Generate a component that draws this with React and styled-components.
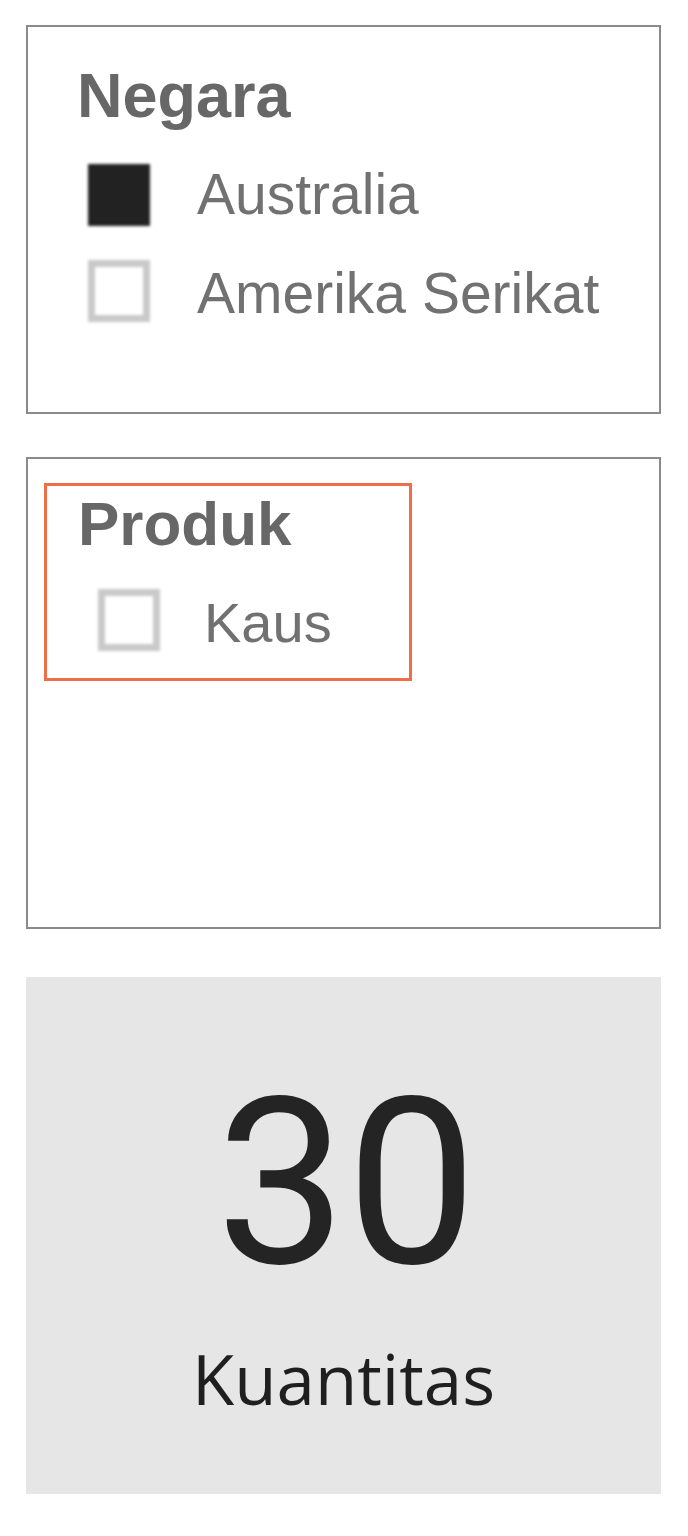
import React from "react"
import styled, { createGlobalStyle } from "styled-components"

const GlobalStyle = createGlobalStyle`
  html, body {
    margin: 0;
    padding: 0;
    background: #ffffff;
  }
  * {
    box-sizing: border-box;
  }
`

const slicers = [
  {
    title: "Negara",
    items: [
      { label: "Australia", checked: true },
      { label: "Amerika Serikat", checked: false },
    ],
  },
  {
    title: "Produk",
    items: [{ label: "Kaus", checked: false }],
  },
]

function Slicer({ title, items, compact }) {
  return (
    <>
      <Title $compact={compact}>{title}</Title>
      {items.map((item) => (
        <Option key={item.label} $compact={compact}>
          <Check $checked={item.checked} />
          <Label $compact={compact}>{item.label}</Label>
        </Option>
      ))}
    </>
  )
}

export default function App() {
  const [country, product] = slicers
  return (
    <Page>
      <GlobalStyle />
      <Panel $height={389}>
        <Body>
          <Slicer title={country.title} items={country.items} />
        </Body>
      </Panel>
      <Panel $height={472}>
        <Highlight>
          <Slicer title={product.title} items={product.items} compact />
        </Highlight>
      </Panel>
      <Card>
        <Value>30</Value>
        <Caption>Kuantitas</Caption>
      </Card>
    </Page>
  )
}

const Page = styled.div`
  display: flex;
  flex-direction: column;
  gap: 43px;
  width: 688px;
  height: 1536px;
  padding: 25px 0 0 26px;
  background: #ffffff;
`

const Panel = styled.section`
  width: 635px;
  height: ${(p) => p.$height}px;
  border: 2px solid #8a8a8a;
  background: #ffffff;
`

const Body = styled.div`
  padding: 37px 0 0 49px;
`

const Highlight = styled.div`
  width: 368px;
  height: 198px;
  margin: 24px 0 0 16px;
  padding: 7px 0 0 31px;
  border: 3px solid #ef6e48;
`

const Title = styled.h2`
  margin: 0 0 ${(p) => (p.$compact ? 24 : 18)}px;
  font-family: "Liberation Sans", Arial, sans-serif;
  font-weight: 700;
  font-size: ${(p) => (p.$compact ? 62 : 63)}px;
  line-height: ${(p) => (p.$compact ? 62 : 63)}px;
  color: #676767;
`

const Option = styled.div`
  display: flex;
  align-items: center;
  height: ${(p) => (p.$compact ? 88 : 99)}px;
  padding-left: ${(p) => (p.$compact ? 20 : 11)}px;
  gap: ${(p) => (p.$compact ? 44 : 47)}px;
`

const Check = styled.span`
  flex: none;
  width: 62px;
  height: 62px;
  margin-top: ${(p) => (p.$checked ? 0 : -6)}px;
  background: ${(p) => (p.$checked ? "#222222" : "#ffffff")};
  border: ${(p) => (p.$checked ? "none" : "7px solid #c9c9c9")};
  filter: blur(1.4px);
`

const Label = styled.span`
  font-family: "Liberation Sans", Arial, sans-serif;
  font-size: ${(p) => (p.$compact ? 56 : 57)}px;
  line-height: ${(p) => (p.$compact ? 88 : 99)}px;
  color: #717171;
  white-space: nowrap;
`

const Card = styled.section`
  display: flex;
  flex-direction: column;
  align-items: center;
  width: 635px;
  height: 517px;
  margin-top: 5px;
  padding-top: 91px;
  background: #e6e6e6;
`

const Value = styled.div`
  font-family: Roboto, "Liberation Sans", sans-serif;
  font-weight: 400;
  font-size: 232px;
  line-height: 1;
  color: #242424;
  margin-left: 6px;
`

const Caption = styled.div`
  margin-top: 44px;
  font-family: "Open Sans", "Noto Sans", sans-serif;
  font-size: 69px;
  line-height: 1;
  color: #1f1f1f;
`
